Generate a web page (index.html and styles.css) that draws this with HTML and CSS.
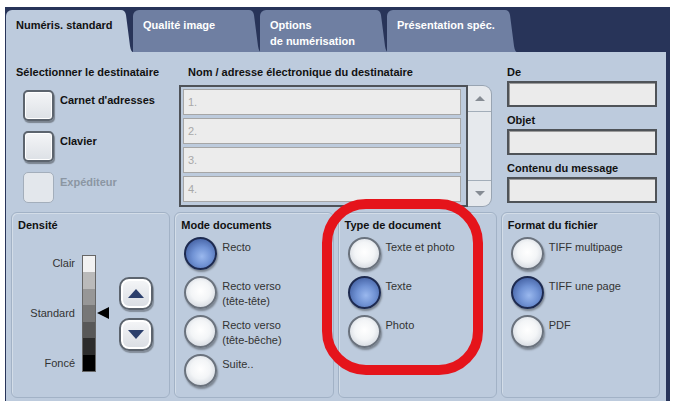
FILE: index.html
```html
<!DOCTYPE html>
<html lang="fr">
<head>
<meta charset="utf-8">
<title>Numéris. standard</title>
<link rel="stylesheet" href="styles.css">
</head>
<body>
<div class="frame">
  <div class="tabs">
    <div class="tab tab-active t1">Numéris. standard</div>
    <div class="tab t2">Qualité image</div>
    <div class="tab t3">Options<br>de numérisation</div>
    <div class="tab t4">Présentation spéc.</div>
  </div>
  <div class="panel">
    <div class="top">
      <div class="dest">
        <div class="label">Sélectionner le destinataire</div>
        <div class="dest-list">
          <div class="dest-item"><span class="sqbtn"></span><span class="dest-text">Carnet d'adresses</span></div>
          <div class="dest-item"><span class="sqbtn"></span><span class="dest-text">Clavier</span></div>
          <div class="dest-item disabled"><span class="sqbtn"></span><span class="dest-text">Expéditeur</span></div>
        </div>
      </div>
      <div class="recip">
        <div class="label recip-label">Nom / adresse électronique du destinataire</div>
        <div class="recip-box">
          <div class="rows">
            <div class="row">1.</div>
            <div class="row">2.</div>
            <div class="row">3.</div>
            <div class="row">4.</div>
          </div>
          <div class="scroll">
            <div class="scroll-end"><span class="tri-up-s"></span></div>
            <div class="scroll-mid"></div>
            <div class="scroll-end"><span class="tri-down-s"></span></div>
          </div>
        </div>
      </div>
      <div class="msg">
        <div class="label">De</div>
        <div class="input"></div>
        <div class="label">Objet</div>
        <div class="input"></div>
        <div class="label">Contenu du message</div>
        <div class="input"></div>
      </div>
    </div>
    <div class="groups">
      <div class="group">
        <div class="label">Densité</div>
        <div class="density">
          <div class="dens-labels">
            <span>Clair</span>
            <span>Standard</span>
            <span>Foncé</span>
          </div>
          <div class="dens-bar">
            <span class="s1"></span><span class="s2"></span><span class="s3"></span><span class="s4"></span><span class="s5"></span><span class="s6"></span><span class="s7"></span>
          </div>
          <div class="dens-mark"><span class="mark"></span></div>
          <div class="dens-btns">
            <div class="updown"><span class="tri-up"></span></div>
            <div class="updown"><span class="tri-down"></span></div>
          </div>
        </div>
      </div>
      <div class="group">
        <div class="label">Mode documents</div>
        <div class="radios">
          <div class="radio-row"><span class="radio on"></span><span class="rlabel">Recto</span></div>
          <div class="radio-row"><span class="radio"></span><span class="rlabel">Recto verso<br>(tête-tête)</span></div>
          <div class="radio-row"><span class="radio"></span><span class="rlabel">Recto verso<br>(tête-bêche)</span></div>
          <div class="radio-row"><span class="radio"></span><span class="rlabel">Suite..</span></div>
        </div>
      </div>
      <div class="group">
        <div class="label">Type de document</div>
        <div class="radios">
          <div class="radio-row"><span class="radio"></span><span class="rlabel">Texte et photo</span></div>
          <div class="radio-row"><span class="radio on"></span><span class="rlabel">Texte</span></div>
          <div class="radio-row"><span class="radio"></span><span class="rlabel">Photo</span></div>
        </div>
      </div>
      <div class="group">
        <div class="label">Format du fichier</div>
        <div class="radios">
          <div class="radio-row"><span class="radio"></span><span class="rlabel">TIFF multipage</span></div>
          <div class="radio-row"><span class="radio on"></span><span class="rlabel">TIFF une page</span></div>
          <div class="radio-row"><span class="radio"></span><span class="rlabel">PDF</span></div>
        </div>
      </div>
    </div>
  </div>
</div>
<div class="highlight"></div>
</body>
</html>
```

FILE: styles.css
```css
* { box-sizing: border-box; }
html, body { margin: 0; padding: 0; background: #ffffff; }
body {
  font-family: "Liberation Sans", Arial, sans-serif;
  font-size: 11px;
  color: #333;
  width: 673px;
  height: 401px;
  overflow: hidden;
  position: relative;
}

.frame {
  margin: 7px 0 0 5px;
  width: 665px;
  height: 394px;
  background: #283459;
  padding: 3px 4px 4px 1px;
  display: flex;
  flex-direction: column;
}

/* tabs */
.tabs { display: flex; height: 42px; flex: none; }
.tab {
  position: relative;
  height: 42px;
  padding: 7px 0 0 10px;
  line-height: 16px;
  font-weight: bold;
  color: #fff;
  background: #6f7fa2;
  border-radius: 6px 0 0 0;
  margin-right: 14px;
  white-space: nowrap;
}
.tab::after {
  content: "";
  position: absolute;
  left: 100%;
  top: 0;
  width: 15px;
  height: 42px;
  background: inherit;
  clip-path: path('M0 0 L3 0 Q7 0 8 5 L12 36 Q13 42 15 42 L0 42 Z');
}
.tab-active { background: #bdcbdd; color: #111; z-index: 2; }
.t1 { width: 112px; margin-right: 15px; }
.t2 { width: 113px; }
.t3 { width: 113px; }
.t4 { width: 115px; }

/* panel */
.panel {
  flex: 1;
  background: #bdcbdd;
  display: flex;
  flex-direction: column;
}
.label { font-weight: bold; color: #111; line-height: 16px; white-space: nowrap; }

.top { height: 160px; padding-top: 12px; display: flex; }

.dest { width: 173px; padding-left: 10px; }
.dest-list { margin-top: 10px; padding-left: 7px; display: flex; flex-direction: column; gap: 10px; }
.dest-item { display: flex; align-items: flex-start; gap: 6px; height: 31px; }
.sqbtn {
  width: 31px; height: 31px; flex: none;
  border: 2px solid #5c646e;
  border-radius: 5px;
  background: linear-gradient(#f4f5f7, #dde1e6);
  box-shadow: 1px 2px 1px rgba(0,0,0,0.35), inset 0 0 0 1px #ffffff;
}
.dest-text { font-weight: bold; color: #111; line-height: 14px; margin-top: 3px; }
.dest-item.disabled .sqbtn { border: 1px solid #a3aebb; background: #e3e7ec; box-shadow: none; }
.dest-item.disabled .dest-text { color: #8b96a3; }

.recip { width: 313px; }
.recip-label { padding-left: 9px; }
.recip-box { display: flex; margin-top: 5px; height: 122px; }
.rows {
  width: 289px;
  border: 2px solid #4e5258;
  padding: 2px 5px 3px 2px;
  display: flex; flex-direction: column; gap: 3px;
  background: #bdcbdd;
}
.row {
  height: 26px;
  background: #ececec;
  border: 1px solid #a6a6a6;
  color: #a8a8a8;
  line-height: 24px;
  padding-left: 4px;
}
.scroll {
  width: 24px;
  border: 1px solid #98a4b2;
  border-left: none;
  border-radius: 0 9px 9px 0;
  background: #e6e9ed;
  display: flex; flex-direction: column;
}
.scroll-end { height: 25px; display: flex; align-items: center; justify-content: center; }
.scroll-mid { flex: 1; border-top: 1px solid #a2adb9; border-bottom: 1px solid #a2adb9; }
.tri-up-s { width: 0; height: 0; border-left: 5px solid transparent; border-right: 5px solid transparent; border-bottom: 5px solid #868c94; }
.tri-down-s { width: 0; height: 0; border-left: 5px solid transparent; border-right: 5px solid transparent; border-top: 5px solid #868c94; }

.msg { width: 174px; padding-left: 15px; }
.input {
  width: 150px; height: 26px;
  margin-top: 1px; margin-bottom: 5px;
  border: 2px solid #4f5358;
  background: #ebebeb;
  box-shadow: inset 1px 1px 0 #9a9a9a;
}

/* groups */
.groups {
  flex: 1;
  display: grid;
  grid-template-columns: repeat(4, 1fr);
  gap: 4px;
  padding: 0 6px 5px 5px;
}
.group {
  border: 1px solid #a2b2c6;
  border-radius: 6px;
  box-shadow: inset 1px 1px 0 #d3dde8;
  padding: 4px 6px;
}

.radios { margin-top: 4px; padding-left: 3px; }
.radio-row { display: flex; align-items: flex-start; gap: 5px; height: 39px; }
.radio {
  width: 33px; height: 33px; flex: none;
  border-radius: 50%;
  border: 2px solid #6a727d;
  background: radial-gradient(circle at 50% 45%, #ffffff 0%, #f3f5f7 45%, #d5dae1 80%, #b9c0c9 100%);
  box-shadow: 1px 2px 2px rgba(0,0,0,0.35);
}
.radio.on {
  border-color: #1d2a50;
  background: radial-gradient(circle at 55% 60%, #9ab8ee 0%, #7092d4 40%, #4a68aa 75%, #2d4377 100%);
}
.rlabel { margin-top: 3px; line-height: 15px; color: #333; white-space: nowrap; }

/* density */
.density { display: flex; align-items: flex-start; margin-top: 22px; }
.dens-labels {
  width: 57px; height: 117px;
  display: flex; flex-direction: column; justify-content: space-between; align-items: flex-end;
  line-height: 17px; color: #333;
}
.dens-bar {
  margin-left: 7px;
  width: 14px; height: 117px;
  display: flex; flex-direction: column;
  border: 1px solid #666;
}
.dens-bar span { flex: 1; }
.s1 { background: #f2f2f2; }
.s2 { background: #bababa; }
.s3 { background: #979797; }
.s4 { background: #777777; }
.s5 { background: #585858; }
.s6 { background: #2c2c2c; }
.s7 { background: #000000; }
.dens-mark { margin-left: 1px; padding-top: 52px; }
.mark { display: block; width: 0; height: 0; border-top: 6px solid transparent; border-bottom: 6px solid transparent; border-right: 12px solid #000; }
.dens-btns { margin-left: 10px; padding-top: 22px; display: flex; flex-direction: column; gap: 8px; }
.updown {
  width: 34px; height: 33px;
  border: 2px solid #5c646e;
  border-radius: 10px;
  background: linear-gradient(#f5f6f8, #d9dde3);
  box-shadow: 1px 2px 1px rgba(0,0,0,0.3), inset 0 0 0 2px #ffffff;
  display: flex; align-items: center; justify-content: center;
}
.tri-up { width: 0; height: 0; border-left: 8px solid transparent; border-right: 8px solid transparent; border-bottom: 9px solid #2b3f6c; }
.tri-down { width: 0; height: 0; border-left: 8px solid transparent; border-right: 8px solid transparent; border-top: 9px solid #2b3f6c; }

/* red annotation overlay */
.highlight {
  position: absolute;
  left: 322px; top: 199px;
  width: 161px; height: 176px;
  border: 10px solid #e5141b;
  border-radius: 44px;
  pointer-events: none;
}
```
